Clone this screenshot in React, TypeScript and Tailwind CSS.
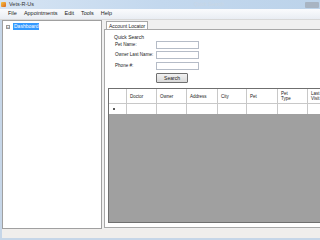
const COLUMNS = [
  { label: "Doctor", w: "w-[30px]" },
  { label: "Owner", w: "w-[30px]" },
  { label: "Address", w: "w-[31px]" },
  { label: "City", w: "w-[29px]" },
  { label: "Pet", w: "w-[31px]" },
  { label: "Pet Type", w: "w-[30px]" },
  { label: "Last Visit", w: "w-[30px]" },
]

const MENU = ["File", "Appointments", "Edit", "Tools", "Help"]

const FIELDS = [
  { label: "Pet Name:", mt: "" },
  { label: "Owner Last Name:", mt: "" },
  { label: "Phone #:", mt: "mt-[1px]" },
]

export default function App() {
  return (
    <div
      className="flex h-[240px] w-[320px] flex-col overflow-hidden bg-[#f0f0f0] text-[5px] leading-none text-[#222]"
      style={{ fontFamily: '"Liberation Sans", Arial, sans-serif' }}
    >
      {/* title bar */}
      <div className="flex h-[9px] shrink-0 items-center bg-gradient-to-r from-[#d6e4f3] via-[#c3d8ee] to-[#bcd3ea] pl-[1px]">
        <div className="mr-[3px] h-[5px] w-[5px] rounded-[1px] bg-gradient-to-br from-[#f5c542] to-[#d9651f]" />
        <span className="text-[5.5px] text-[#333]">Vets-R-Us</span>
        <span className="ml-[160px] text-[5px] text-[#c8d6e6]">Quick Search</span>
        <div className="ml-auto mr-[1px] h-[6px] w-[14px] rounded-[1px] bg-[#a8b4c2]" />
      </div>

      {/* menu bar */}
      <div className="flex h-[11px] shrink-0 items-center gap-[7px] border-b border-[#d8d8d8] bg-gradient-to-b from-[#fafbfd] to-[#e9edf3] pl-[8px] text-[5.5px]">
        {MENU.map((m) => (
          <span key={m}>{m}</span>
        ))}
      </div>

      {/* body */}
      <div className="flex min-h-0 flex-1 border-l-2 border-[#c6d6e8]">
        {/* tree pane */}
        <div className="w-[100px] shrink-0 border border-[#a0a0a0] bg-white pt-[2px]">
          <div className="flex items-center gap-[3px] pl-[3px]">
            <div className="flex h-[4px] w-[4px] items-center justify-center border border-[#9a9a9a] bg-white text-[4px] text-[#555]">
              +
            </div>
            <span className="bg-[#3399ff] px-[1px] py-[1px] text-[5px] text-white">Dashboard</span>
          </div>
        </div>

        {/* tab area */}
        <div className="ml-[2px] flex min-w-0 flex-1 flex-col pt-[1px]">
          <div className="flex pl-[2px]">
            <div className="h-[8px] border border-b-0 border-[#a8a8a8] bg-white px-[2px] pt-[1.5px] text-[5px]">
              Account Locator
            </div>
          </div>
          <div className="mb-[1px] flex min-h-0 flex-1 flex-col border border-r-0 border-[#a8a8a8] bg-white pl-[3px] pt-[5px]">
            {/* quick search */}
            <div className="ml-[6px] text-[5px]">Quick Search</div>
            <div className="ml-[7px] mt-[1px] flex flex-col gap-[2px]">
              {FIELDS.map((f) => (
                <div key={f.label} className={`flex h-[8px] items-center ${f.mt}`}>
                  <span className="w-[41px] whitespace-nowrap text-[4.6px]">{f.label}</span>
                  <div className="h-[8px] w-[43px] border border-[#b5bcc7] bg-white" />
                </div>
              ))}
            </div>
            <div className="ml-[48px] mt-[3px] flex h-[10px] w-[32px] items-center justify-center rounded-[1px] border border-[#707070] bg-gradient-to-b from-[#f2f2f2] to-[#d9d9d9] text-[5px]">
              Search
            </div>

            {/* grid */}
            <div className="mb-[4px] mt-[5px] flex min-h-0 flex-1 flex-col overflow-hidden border border-r-0 border-[#6f6f6f] bg-[#a0a0a0]">
              <div className="flex h-[15px] shrink-0 border-b border-[#c8c8c8] bg-white">
                <div className="w-[18px] shrink-0 border-r border-[#c8c8c8]" />
                {COLUMNS.map((c) => (
                  <div
                    key={c.label}
                    className={`${c.w} shrink-0 border-r border-[#c8c8c8] pl-[3px] ${
                      c.label.includes(" ") ? "pt-[2px]" : "flex items-center"
                    } text-[4.5px] leading-[5px]`}
                  >
                    {c.label.includes(" ") ? (
                      <>
                        {c.label.split(" ")[0]}
                        <br />
                        {c.label.split(" ")[1]}
                      </>
                    ) : (
                      c.label
                    )}
                  </div>
                ))}
              </div>
              <div className="flex h-[10px] shrink-0 bg-white">
                <div className="flex w-[18px] shrink-0 items-center border-r border-[#c8c8c8] pl-[4px]">
                  <div className="h-[2px] w-[2px] rounded-full bg-[#222]" />
                </div>
                {COLUMNS.map((c) => (
                  <div key={c.label} className={`${c.w} shrink-0 border-r border-[#c8c8c8]`} />
                ))}
              </div>
            </div>
          </div>
        </div>
      </div>

      {/* status bar */}
      <div className="h-[9px] shrink-0 border-l-2 border-[#c6d6e8] bg-[#f0eeec]" />
      <div className="h-[2px] shrink-0 bg-[#c6d6e8]" />
    </div>
  )
}
